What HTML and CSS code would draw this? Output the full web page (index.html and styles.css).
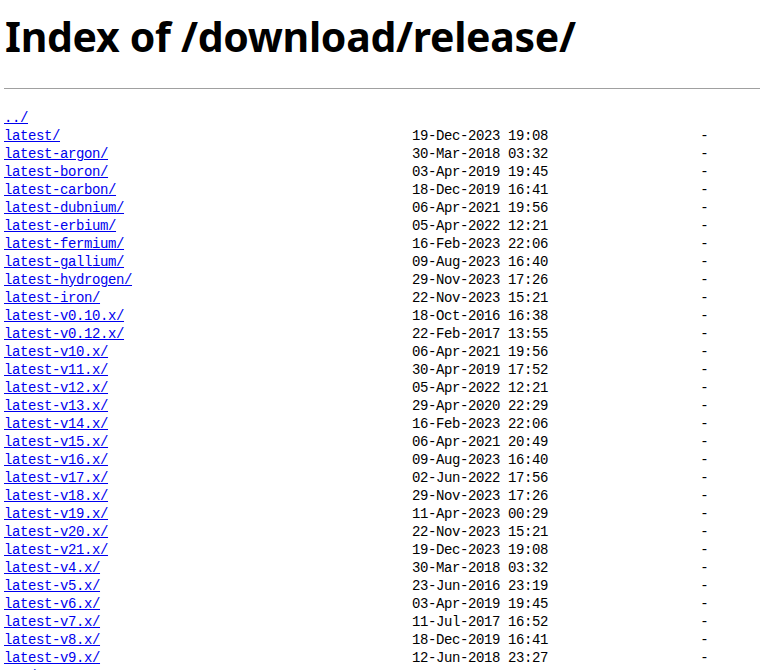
FILE: index.html
```html
<!DOCTYPE html>
<html>
<head>
<meta charset="utf-8">
<title>Index of /download/release/</title>
<link rel="stylesheet" href="styles.css">
</head>
<body class="page">
<h1 class="title">Index of /download/release/</h1>
<hr class="rule">
<pre class="listing"><a href="../">../</a>
<a href="latest/">latest/</a>                                            19-Dec-2023 19:08                   -
<a href="latest-argon/">latest-argon/</a>                                      30-Mar-2018 03:32                   -
<a href="latest-boron/">latest-boron/</a>                                      03-Apr-2019 19:45                   -
<a href="latest-carbon/">latest-carbon/</a>                                     18-Dec-2019 16:41                   -
<a href="latest-dubnium/">latest-dubnium/</a>                                    06-Apr-2021 19:56                   -
<a href="latest-erbium/">latest-erbium/</a>                                     05-Apr-2022 12:21                   -
<a href="latest-fermium/">latest-fermium/</a>                                    16-Feb-2023 22:06                   -
<a href="latest-gallium/">latest-gallium/</a>                                    09-Aug-2023 16:40                   -
<a href="latest-hydrogen/">latest-hydrogen/</a>                                   29-Nov-2023 17:26                   -
<a href="latest-iron/">latest-iron/</a>                                       22-Nov-2023 15:21                   -
<a href="latest-v0.10.x/">latest-v0.10.x/</a>                                    18-Oct-2016 16:38                   -
<a href="latest-v0.12.x/">latest-v0.12.x/</a>                                    22-Feb-2017 13:55                   -
<a href="latest-v10.x/">latest-v10.x/</a>                                      06-Apr-2021 19:56                   -
<a href="latest-v11.x/">latest-v11.x/</a>                                      30-Apr-2019 17:52                   -
<a href="latest-v12.x/">latest-v12.x/</a>                                      05-Apr-2022 12:21                   -
<a href="latest-v13.x/">latest-v13.x/</a>                                      29-Apr-2020 22:29                   -
<a href="latest-v14.x/">latest-v14.x/</a>                                      16-Feb-2023 22:06                   -
<a href="latest-v15.x/">latest-v15.x/</a>                                      06-Apr-2021 20:49                   -
<a href="latest-v16.x/">latest-v16.x/</a>                                      09-Aug-2023 16:40                   -
<a href="latest-v17.x/">latest-v17.x/</a>                                      02-Jun-2022 17:56                   -
<a href="latest-v18.x/">latest-v18.x/</a>                                      29-Nov-2023 17:26                   -
<a href="latest-v19.x/">latest-v19.x/</a>                                      11-Apr-2023 00:29                   -
<a href="latest-v20.x/">latest-v20.x/</a>                                      22-Nov-2023 15:21                   -
<a href="latest-v21.x/">latest-v21.x/</a>                                      19-Dec-2023 19:08                   -
<a href="latest-v4.x/">latest-v4.x/</a>                                       30-Mar-2018 03:32                   -
<a href="latest-v5.x/">latest-v5.x/</a>                                       23-Jun-2016 23:19                   -
<a href="latest-v6.x/">latest-v6.x/</a>                                       03-Apr-2019 19:45                   -
<a href="latest-v7.x/">latest-v7.x/</a>                                       11-Jul-2017 16:52                   -
<a href="latest-v8.x/">latest-v8.x/</a>                                       18-Dec-2019 16:41                   -
<a href="latest-v9.x/">latest-v9.x/</a>                                       12-Jun-2018 23:27                   -
<a href="npm/">npm/</a>                                               25-Nov-2014 11:57                   -
</pre>
</body>
</html>
```
FILE: styles.css
```css
html, body {
  background: #ffffff;
}
.page {
  margin: 0;
  padding: 0 4px;
  color: #000000;
  font-family: "Noto Sans", "Open Sans", sans-serif;
}
.title {
  margin: 8px 0 0 1px;
  font-size: 41px;
  font-weight: 700;
  line-height: 56px;
  letter-spacing: -0.3px;
}
.rule {
  margin: 24px -4px 0 0;
  border: 0;
  border-top: 1px solid #a0a0a0;
  height: 0;
}
.listing {
  margin: 20px 0 0 0;
  font-family: "Liberation Mono", "DejaVu Sans Mono", monospace;
  font-size: 14px;
  letter-spacing: -0.4px;
  line-height: 18px;
  white-space: pre;
}
.listing a {
  color: #0000ee;
  text-decoration: underline;
}
```
